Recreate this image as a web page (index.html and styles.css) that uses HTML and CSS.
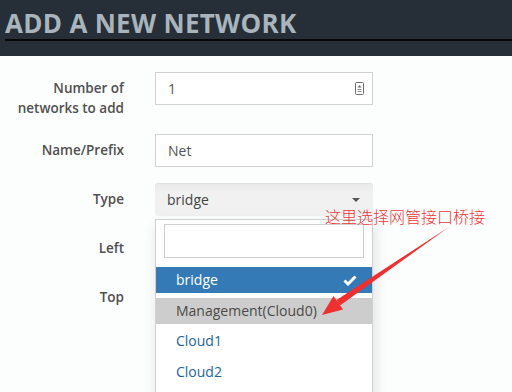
FILE: index.html
```html
<!DOCTYPE html>
<html lang="en">
<head>
  <meta charset="UTF-8" />
  <title>Add a new network</title>
  <link rel="stylesheet" href="styles.css">
</head>
<body>

  <div class="top">
    <h1>ADD A NEW NETWORK</h1>
  </div>

  <div class="form">
    <div class="row">
      <label>Number of<br>networks to add</label>
      <div class="input">
        1
        <svg class="spin" width="9" height="13" viewBox="0 0 9 13">
          <rect x="0.5" y="0.5" width="8" height="12" rx="1" fill="#fff" stroke="#6d6d6d" />
          <path d="M4.5 3 L6.5 5.5 L2.5 5.5 Z" fill="#6d6d6d" />
          <rect x="2.5" y="7" width="4" height="1" fill="#8a8a8a" />
          <rect x="2.5" y="9" width="4" height="1" fill="#8a8a8a" />
        </svg>
      </div>
    </div>
    <div class="row">
      <label>Name/Prefix</label>
      <div class="input">Net</div>
    </div>
    <div class="row">
      <label>Type</label>
      <div class="select">bridge<span class="caret"></span></div>
    </div>
    <div class="row">
      <label>Left</label>
      <div class="input"></div>
    </div>
    <div class="row">
      <label>Top</label>
      <div class="input"></div>
    </div>
    <div class="row">
      <span></span>
      <div class="btn-save"></div>
    </div>
  </div>

  <!-- opened select menu -->
  <div class="dropdown">
    <div class="search"></div>
    <ul class="options">
      <li class="selected">bridge
        <svg class="check" width="14" height="11" viewBox="0 0 14 11">
          <path d="M1.5 5.5 L5 9 L12.5 1.5" fill="none" stroke="#fff" stroke-width="3" />
        </svg>
      </li>
      <li class="hover">Management(Cloud0)</li>
      <li>Cloud1</li>
      <li>Cloud2</li>
    </ul>
  </div>

  <div class="note">这里选择网管接口桥接</div>
  <svg class="arrow" width="140" height="100" viewBox="318 222 140 100">
    <path d="M449 227 L340 305.5 L336.5 300 Z" fill="#ee3030" />
    <path d="M322 315 L333.5 296 L343 309.5 Z" fill="#ee3030" />
  </svg>

</body>
</html>
```

FILE: styles.css
```css
body {
  margin: 0;
  font-family: "Open Sans", "Noto Sans", sans-serif;
  background: #fcfdfd;
  color: #555;
  position: relative;
  height: 392px;
  overflow: hidden;
}
.top {
  background: #262f37;
  height: 56px;
  padding: 7px 0 0 5px;
  box-sizing: border-box;
}
.top h1 {
  margin: 0;
  font-family: "Open Sans", sans-serif;
  font-size: 26px;
  font-weight: 700;
  line-height: 32px;
  color: #a9b4bd;
  border-bottom: 2px solid #050709;
  letter-spacing: 0.3px;
}
.form {
  padding-top: 16px;
}
.row {
  display: grid;
  grid-template-columns: 124px 218px;
  column-gap: 31px;
  margin-bottom: 16px;
  align-items: start;
}
.row label {
  text-align: right;
  padding-top: 7px;
  font-size: 13.5px;
  font-weight: 600;
  line-height: 19.5px;
  color: #505050;
}
.input {
  height: 33px;
  box-sizing: border-box;
  border: 1px solid #d2d2d2;
  background: #fff;
  padding: 0 12px;
  font-size: 14px;
  line-height: 31px;
  color: #555;
  display: flex;
  align-items: center;
  justify-content: space-between;
}
.spin {
  margin-right: -4px;
}
.select {
  height: 33px;
  box-sizing: border-box;
  border-radius: 3px;
  background: linear-gradient(#e9e9e9, #f1f1f1 30%, #f0f0f0);
  box-shadow: inset 0 1px 1px rgba(0,0,0,0.04);
  padding: 0 12px;
  font-size: 14px;
  line-height: 33px;
  color: #444;
  display: flex;
  align-items: center;
  justify-content: space-between;
}
.caret {
  width: 0;
  height: 0;
  border-left: 4px solid transparent;
  border-right: 4px solid transparent;
  border-top: 4px solid #555;
  margin-right: 1px;
}
.btn-save {
  height: 32px;
  width: 70px;
  background: #1b7f55;
}
.dropdown {
  position: absolute;
  top: 219px;
  left: 155px;
  width: 218px;
  height: 200px;
  box-sizing: border-box;
  background: #fff;
  border: 1px solid rgba(0,0,0,0.18);
  box-shadow: 2px 6px 12px rgba(0,0,0,0.12);
  padding-top: 4px;
}
.search {
  height: 34px;
  margin: 0 8px;
  box-sizing: border-box;
  border: 1px solid #cfcfcf;
  background: #fff;
}
.options {
  list-style: none;
  margin: 9px 0 0;
  padding: 0;
}
.options li {
  height: 26px;
  line-height: 26px;
  margin-bottom: 4.6px;
  padding: 0 20px;
  font-size: 14px;
  color: #1c64a0;
  display: flex;
  align-items: center;
  justify-content: space-between;
}
.options li.selected {
  background: #337ab7;
  color: #fff;
  padding-right: 15px;
}
.options li.hover {
  background: #cdcdcd;
  color: #4a4a4a;
}
.note {
  position: absolute;
  top: 205px;
  left: 325px;
  font-family: "Noto Sans CJK SC", sans-serif;
  font-size: 16px;
  font-weight: 300;
  line-height: 22px;
  color: #ee3535;
}
.arrow {
  position: absolute;
  left: 318px;
  top: 222px;
}
```
